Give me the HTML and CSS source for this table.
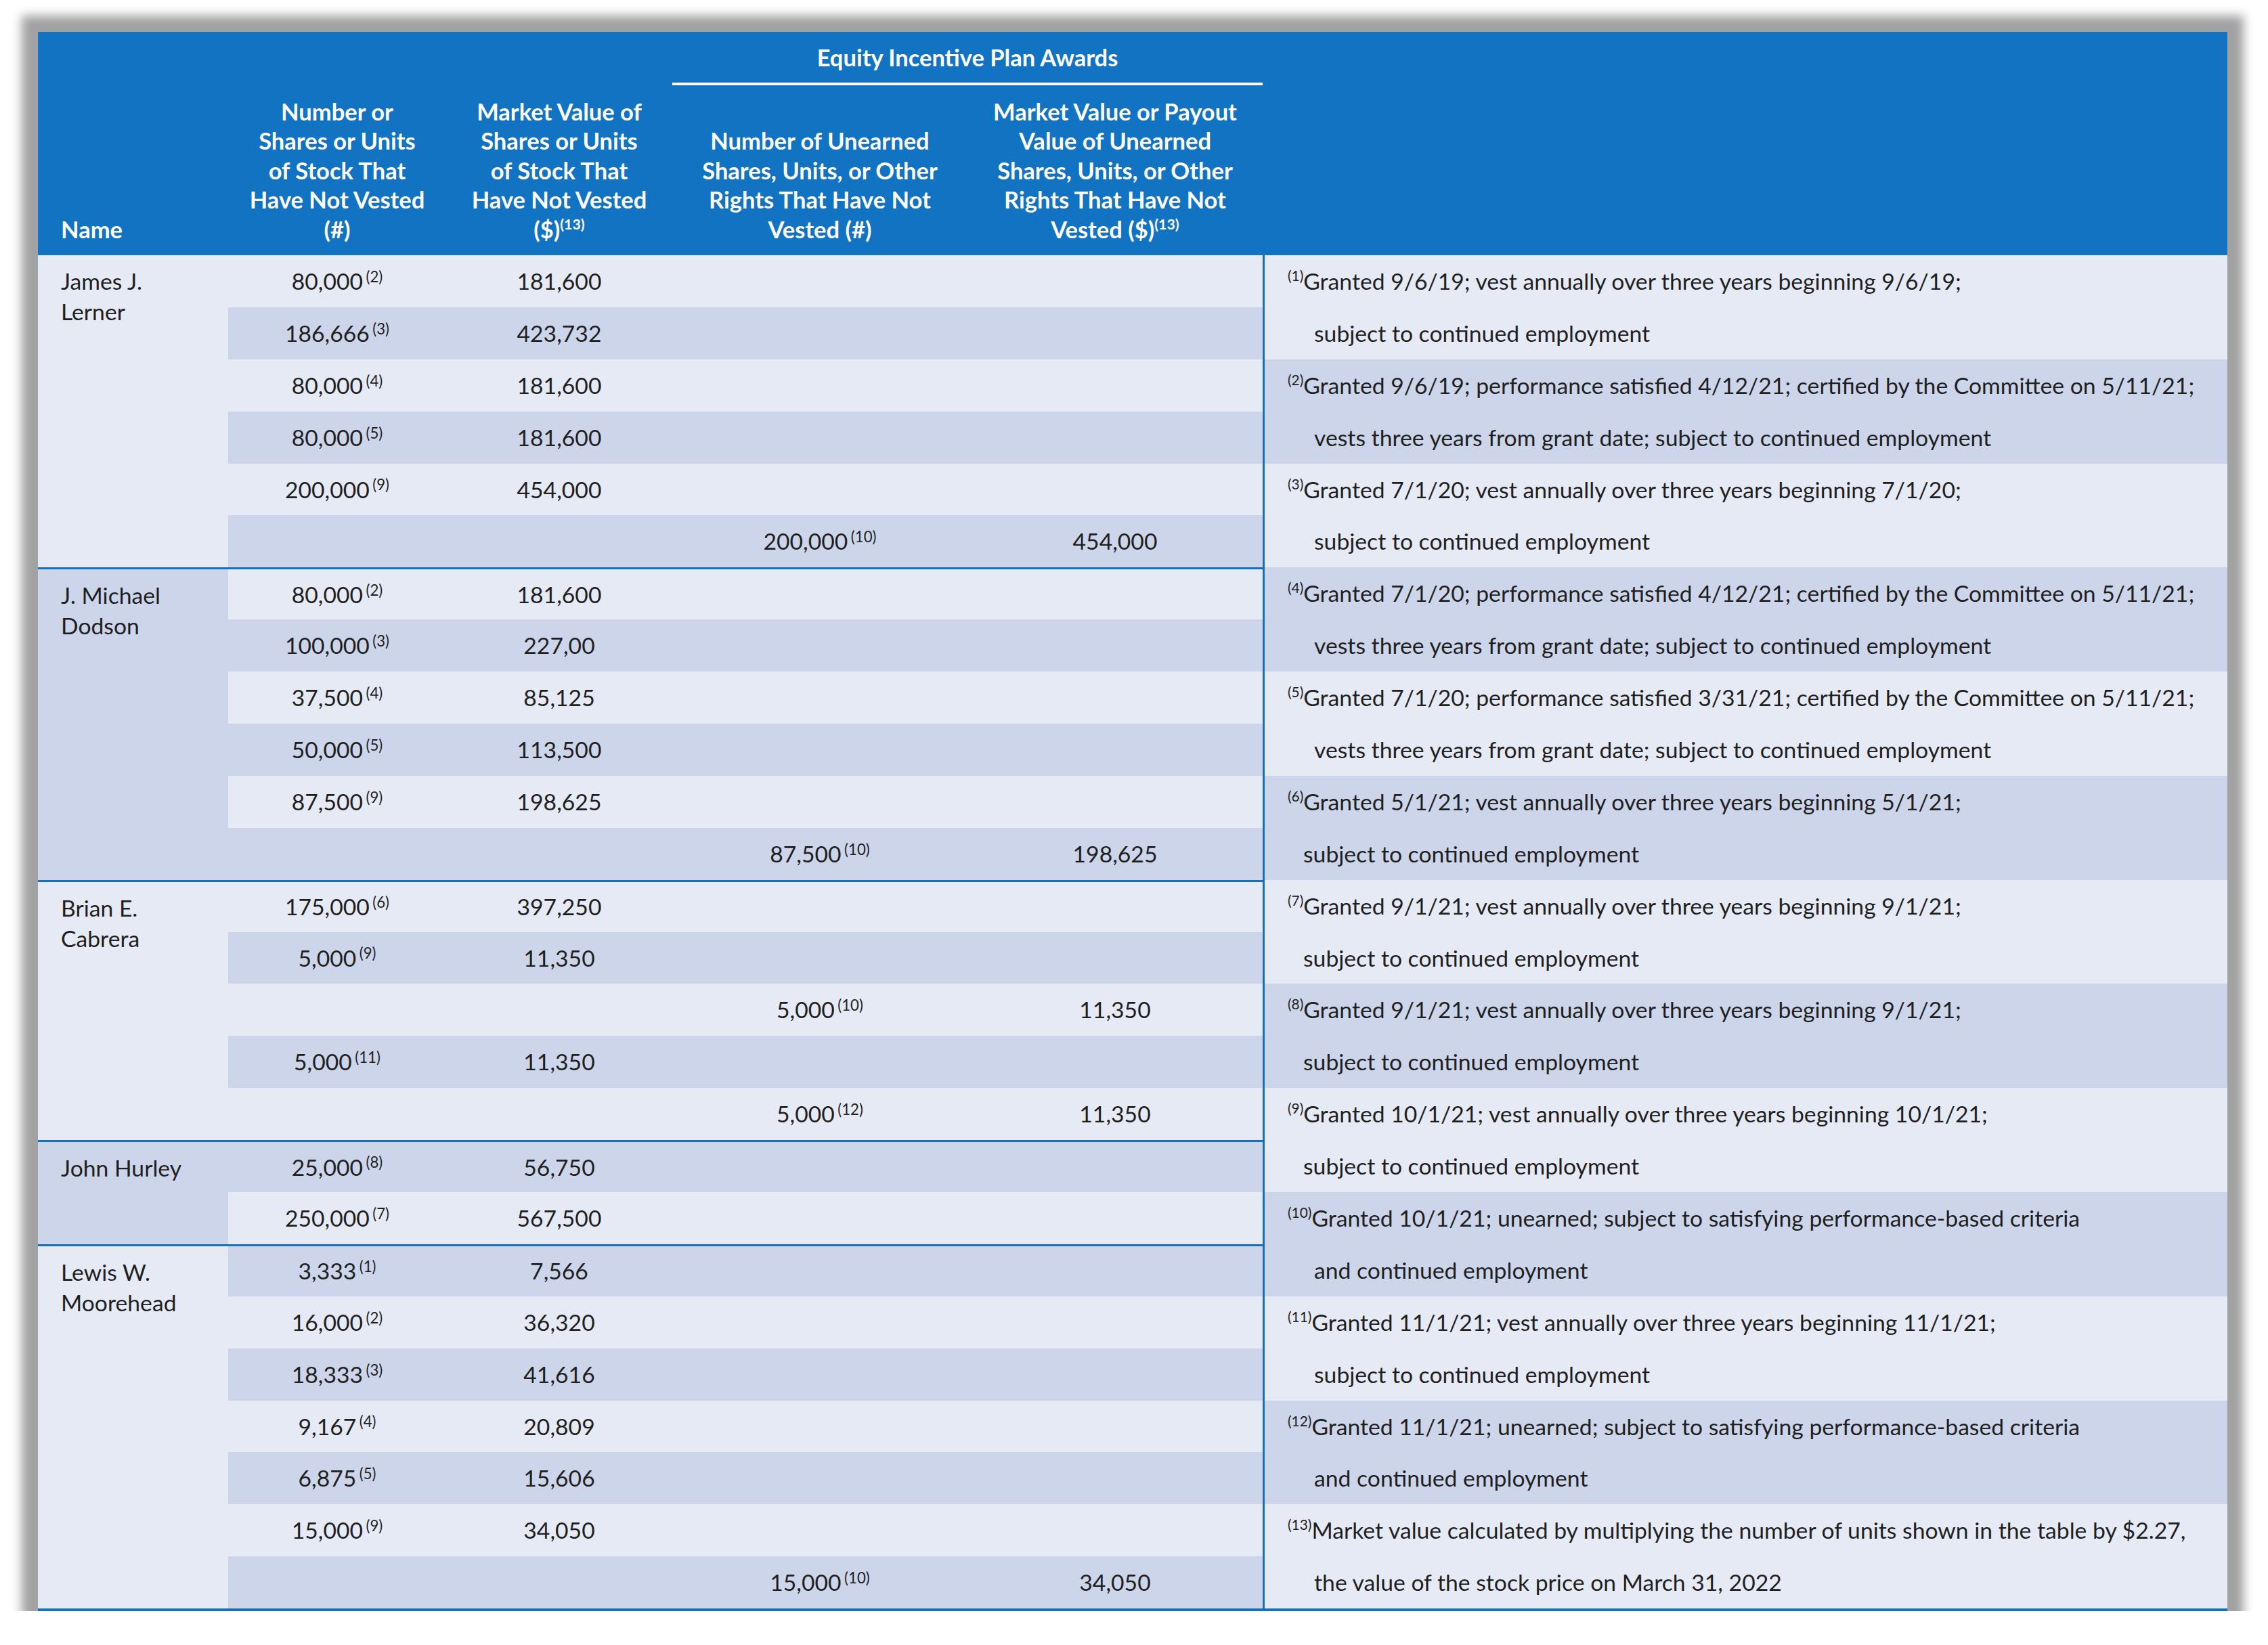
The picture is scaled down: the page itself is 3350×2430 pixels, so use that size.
FILE: index.html
```html
<!DOCTYPE html>
<html lang="en">
<head>
<meta charset="utf-8">
<title>Outstanding Equity Awards</title>
<link rel="stylesheet" href="styles.css">
</head>
<body>
<div class="frame">
<table class="awards">
<colgroup>
<col class="c-name"><col class="c-num"><col class="c-val"><col class="c-un"><col class="c-unv"><col class="c-note">
</colgroup>
<thead>
<tr class="h1">
<th rowspan="2" class="h-name">Name</th>
<th rowspan="2">Number or<br>Shares or Units<br>of Stock That<br>Have Not Vested<br>(#)</th>
<th rowspan="2">Market Value of<br>Shares or Units<br>of Stock That<br>Have Not Vested<br>($)<sup>(13)</sup></th>
<th colspan="2" class="h-group">Equity Incentive Plan Awards</th>
<th rowspan="2" class="h-note"></th>
</tr>
<tr class="h2">
<th>Number of Unearned<br>Shares, Units, or Other<br>Rights That Have Not<br>Vested (#)</th>
<th>Market Value or Payout<br>Value of Unearned<br>Shares, Units, or Other<br>Rights That Have Not<br>Vested ($)<sup>(13)</sup></th>
</tr>
</thead>
<tbody>
<tr>
<td rowspan="6" class="name light">James J.<br>Lerner</td>
<td class="d">80,000<sup>(2)</sup></td><td class="d">181,600</td><td class="d"></td><td class="d"></td>
<td class="note fl"><sup>(1)</sup>Granted 9/6/19; vest annually over three years beginning 9/6/19;</td>
</tr>
<tr>
<td class="d">186,666<sup>(3)</sup></td><td class="d">423,732</td><td class="d"></td><td class="d"></td>
<td class="note fl cont">subject to continued employment</td>
</tr>
<tr>
<td class="d">80,000<sup>(4)</sup></td><td class="d">181,600</td><td class="d"></td><td class="d"></td>
<td class="note fd"><sup>(2)</sup>Granted 9/6/19; performance satisfied 4/12/21; certified by the Committee on 5/11/21;</td>
</tr>
<tr>
<td class="d">80,000<sup>(5)</sup></td><td class="d">181,600</td><td class="d"></td><td class="d"></td>
<td class="note fd cont">vests three years from grant date; subject to continued employment</td>
</tr>
<tr>
<td class="d">200,000<sup>(9)</sup></td><td class="d">454,000</td><td class="d"></td><td class="d"></td>
<td class="note fl"><sup>(3)</sup>Granted 7/1/20; vest annually over three years beginning 7/1/20;</td>
</tr>
<tr>
<td class="d"></td><td class="d"></td><td class="d">200,000<sup>(10)</sup></td><td class="d">454,000</td>
<td class="note fl cont">subject to continued employment</td>
</tr>

<tr class="grp">
<td rowspan="6" class="name dark">J. Michael<br>Dodson</td>
<td class="d">80,000<sup>(2)</sup></td><td class="d">181,600</td><td class="d"></td><td class="d"></td>
<td class="note fd"><sup>(4)</sup>Granted 7/1/20; performance satisfied 4/12/21; certified by the Committee on 5/11/21;</td>
</tr>
<tr>
<td class="d">100,000<sup>(3)</sup></td><td class="d">227,00</td><td class="d"></td><td class="d"></td>
<td class="note fd cont">vests three years from grant date; subject to continued employment</td>
</tr>
<tr>
<td class="d">37,500<sup>(4)</sup></td><td class="d">85,125</td><td class="d"></td><td class="d"></td>
<td class="note fl"><sup>(5)</sup>Granted 7/1/20; performance satisfied 3/31/21; certified by the Committee on 5/11/21;</td>
</tr>
<tr>
<td class="d">50,000<sup>(5)</sup></td><td class="d">113,500</td><td class="d"></td><td class="d"></td>
<td class="note fl cont">vests three years from grant date; subject to continued employment</td>
</tr>
<tr>
<td class="d">87,500<sup>(9)</sup></td><td class="d">198,625</td><td class="d"></td><td class="d"></td>
<td class="note fd"><sup>(6)</sup>Granted 5/1/21; vest annually over three years beginning 5/1/21;</td>
</tr>
<tr>
<td class="d"></td><td class="d"></td><td class="d">87,500<sup>(10)</sup></td><td class="d">198,625</td>
<td class="note fd cont-s">subject to continued employment</td>
</tr>

<tr class="grp">
<td rowspan="5" class="name light">Brian E.<br>Cabrera</td>
<td class="d">175,000<sup>(6)</sup></td><td class="d">397,250</td><td class="d"></td><td class="d"></td>
<td class="note fl"><sup>(7)</sup>Granted 9/1/21; vest annually over three years beginning 9/1/21;</td>
</tr>
<tr>
<td class="d">5,000<sup>(9)</sup></td><td class="d">11,350</td><td class="d"></td><td class="d"></td>
<td class="note fl cont-s">subject to continued employment</td>
</tr>
<tr>
<td class="d"></td><td class="d"></td><td class="d">5,000<sup>(10)</sup></td><td class="d">11,350</td>
<td class="note fd"><sup>(8)</sup>Granted 9/1/21; vest annually over three years beginning 9/1/21;</td>
</tr>
<tr>
<td class="d">5,000<sup>(11)</sup></td><td class="d">11,350</td><td class="d"></td><td class="d"></td>
<td class="note fd cont-s">subject to continued employment</td>
</tr>
<tr>
<td class="d"></td><td class="d"></td><td class="d">5,000<sup>(12)</sup></td><td class="d">11,350</td>
<td class="note fl"><sup>(9)</sup>Granted 10/1/21; vest annually over three years beginning 10/1/21;</td>
</tr>

<tr class="grp">
<td rowspan="2" class="name dark">John Hurley</td>
<td class="d">25,000<sup>(8)</sup></td><td class="d">56,750</td><td class="d"></td><td class="d"></td>
<td class="note fl cont-s">subject to continued employment</td>
</tr>
<tr>
<td class="d">250,000<sup>(7)</sup></td><td class="d">567,500</td><td class="d"></td><td class="d"></td>
<td class="note fd"><sup>(10)</sup>Granted 10/1/21; unearned; subject to satisfying performance-based criteria</td>
</tr>

<tr class="grp">
<td rowspan="7" class="name light">Lewis W.<br>Moorehead</td>
<td class="d">3,333<sup>(1)</sup></td><td class="d">7,566</td><td class="d"></td><td class="d"></td>
<td class="note fd cont">and continued employment</td>
</tr>
<tr>
<td class="d">16,000<sup>(2)</sup></td><td class="d">36,320</td><td class="d"></td><td class="d"></td>
<td class="note fl"><sup>(11)</sup>Granted 11/1/21; vest annually over three years beginning 11/1/21;</td>
</tr>
<tr>
<td class="d">18,333<sup>(3)</sup></td><td class="d">41,616</td><td class="d"></td><td class="d"></td>
<td class="note fl cont">subject to continued employment</td>
</tr>
<tr>
<td class="d">9,167<sup>(4)</sup></td><td class="d">20,809</td><td class="d"></td><td class="d"></td>
<td class="note fd"><sup>(12)</sup>Granted 11/1/21; unearned; subject to satisfying performance-based criteria</td>
</tr>
<tr>
<td class="d">6,875<sup>(5)</sup></td><td class="d">15,606</td><td class="d"></td><td class="d"></td>
<td class="note fd cont">and continued employment</td>
</tr>
<tr>
<td class="d">15,000<sup>(9)</sup></td><td class="d">34,050</td><td class="d"></td><td class="d"></td>
<td class="note fl"><sup>(13)</sup>Market value calculated by multiplying the number of units shown in the table by $2.27,</td>
</tr>
<tr>
<td class="d"></td><td class="d"></td><td class="d">15,000<sup>(10)</sup></td><td class="d">34,050</td>
<td class="note fl cont">the value of the stock price on March 31, 2022</td>
</tr>
</tbody>
</table>
</div>
</body>
</html>
```

FILE: styles.css
```css
html, body {
  margin: 0;
  padding: 0;
  background: #ffffff;
}

body {
  font-family: Lato, "Liberation Sans", sans-serif;
  color: #1f1f1f;
}

.frame {
  width: 3234px;
  margin: 47px 0 0 56px;
  box-shadow: 0 0 14px 24px #a2a2a2;
}

.awards {
  width: 3234px;
  table-layout: fixed;
  border-collapse: separate;
  border-spacing: 0;
  border-bottom: 4px solid #1470bf;
}

.c-name { width: 281px; }
.c-num  { width: 322px; }
.c-val  { width: 334px; }
.c-un   { width: 436px; }
.c-unv  { width: 436px; }
.c-note { width: 1425px; }

/* header */
thead th {
  background: #1173c2;
  color: #ffffff;
  font-weight: 700;
  font-size: 34.5px;
  line-height: 43.5px;
  text-align: center;
  vertical-align: bottom;
  padding: 0 0 17px;
  white-space: nowrap;
}

.h1 { height: 79px; }
.h2 { height: 251px; }

thead th.h-name {
  text-align: left;
  padding-left: 34px;
}

thead th.h-group {
  vertical-align: middle;
  padding: 0;
  border-bottom: 4px solid #ffffff;
}

thead sup {
  font-size: 0.62em;
  line-height: 0;
  vertical-align: 0.6em;
}

/* body */
tbody tr { height: 76.9px; }

tbody td {
  padding: 0;
  font-size: 33.7px;
  line-height: 45px;
  text-align: center;
  vertical-align: middle;
  white-space: nowrap;
}

tbody td.d { background: #e6eaf5; }
tbody tr:nth-child(even) td.d { background: #ccd5ea; }

td.d sup {
  font-size: 0.66em;
  line-height: 0;
  vertical-align: 0.5em;
  margin-left: 0.2em;
}

td.name {
  text-align: left;
  vertical-align: top;
  padding: 16px 0 0 34px;
  white-space: normal;
}

td.name.light { background: #e6eaf5; }
td.name.dark  { background: #ccd5ea; }

tr.grp td:not(.note) {
  border-top: 3px solid #1470bf;
}

td.note {
  text-align: left;
  padding-left: 34px;
  border-left: 3px solid #1470bf;
}

td.note.fl { background: #e6eaf5; }
td.note.fd { background: #ccd5ea; }

td.note.cont   { padding-left: 73px; }
td.note.cont-s { padding-left: 57px; }

td.note sup {
  font-size: 0.62em;
  line-height: 0;
  vertical-align: 0.6em;
}
```
